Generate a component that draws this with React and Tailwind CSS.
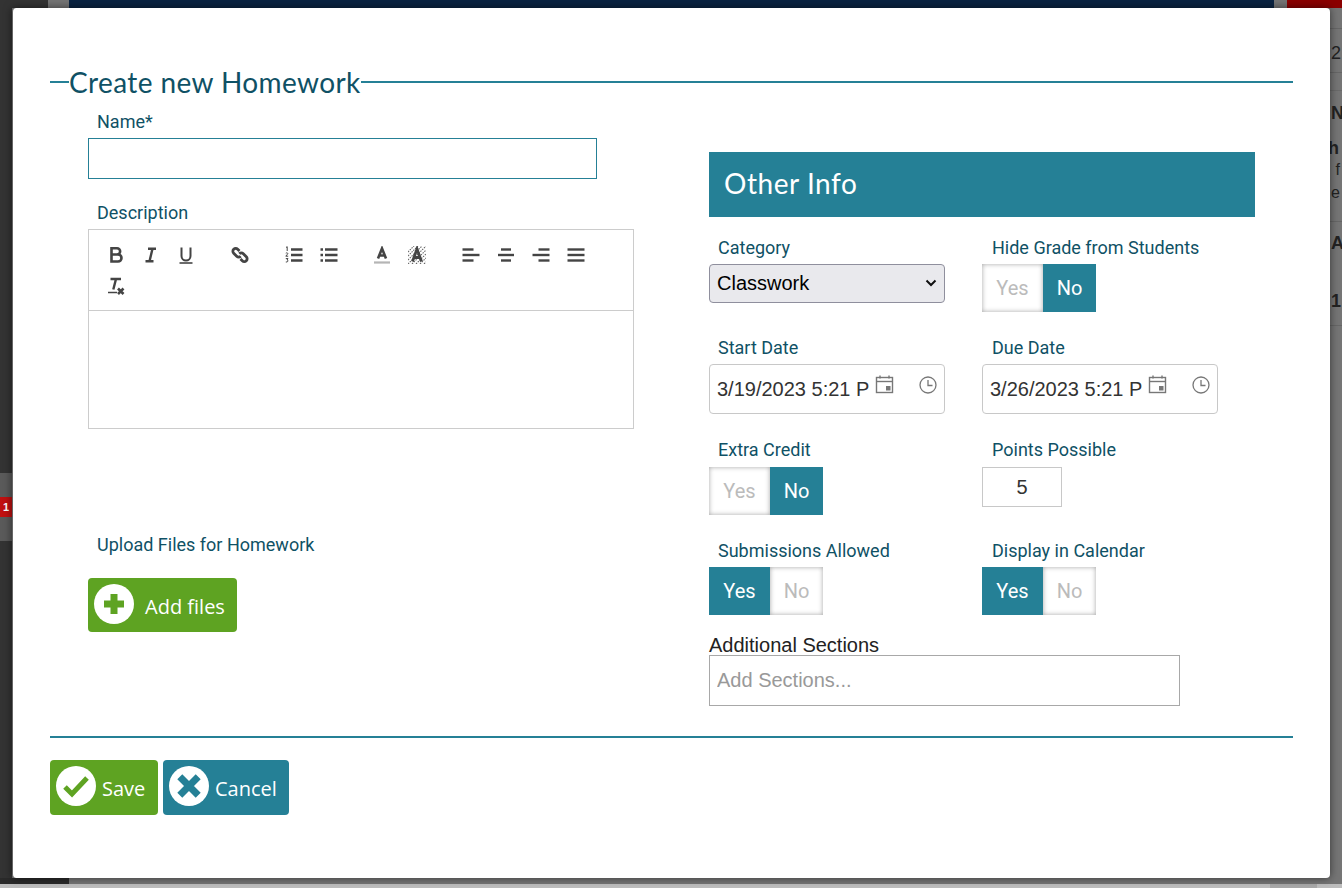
const roboto = "font-['Roboto',sans-serif]";
const arial = "font-['Liberation_Sans',sans-serif]";

function Toggle({ value }) {
  const on = "bg-[#258096] text-white";
  const off = "bg-white text-[#bbbbbb] shadow-[inset_0_0_5px_rgba(0,0,0,0.35)]";
  return (
    <div className={`flex h-12 w-[114px] text-[20px] ${roboto}`}>
      <span className={`flex w-[61px] items-center justify-center ${value === "Yes" ? on : off}`}>Yes</span>
      <span className={`flex w-[53px] items-center justify-center ${value === "No" ? on : off}`}>No</span>
    </div>
  );
}

function Label({ children, className = "" }) {
  return <label className={`block h-6 text-[18px] leading-6 text-[#0f5165] ${roboto} ${className}`}>{children}</label>;
}

function Calendar() {
  return (
    <svg viewBox="0 0 19 19" className="absolute left-[166px] top-[11px] h-[19px] w-[19px]" fill="none" stroke="#777" strokeWidth="1.4">
      <rect x="1.500" y="2.500" width="16" height="15" />
      <path d="M1.500 6.500h16" />
      <path d="M5 0.500v3M14 0.500v3" />
      <rect x="11" y="11" width="4.500" height="4.500" fill="#777" stroke="none" />
    </svg>
  );
}

function Clock() {
  return (
    <svg viewBox="0 0 18 18" className="absolute left-[210px] top-[12px] h-[18px] w-[18px]" fill="none" stroke="#777" strokeWidth="1.300">
      <circle cx="9" cy="9" r="8" />
      <path d="M9 4v5.500h4.500" />
    </svg>
  );
}

function DateField({ value }) {
  return (
    <div className="relative h-[50px] w-[236px]">
      <input
        readOnly
        value={value}
        className={`h-full w-full rounded-[4px] border border-[#c8c8c8] bg-white pl-[7px] pr-[74px] text-[20px] text-[#333] ${arial}`}
      />
      <Calendar />
      <Clock />
    </div>
  );
}

function Tool({ children }) {
  return <span className="flex h-[31px] w-[35px] items-center justify-center">{children}</span>;
}

function Glyph({ children, stroke = "#444" }) {
  return (
    <svg viewBox="0 0 18 18" className="h-[18px] w-[18px]" fill="none" stroke={stroke} strokeWidth="2.400">
      {children}
    </svg>
  );
}

function Lines({ rows }) {
  return (
    <Glyph>
      {rows.map((d) => (
        <path key={d} d={d} />
      ))}
    </Glyph>
  );
}

function Toolbar() {
  return (
    <div className="flex h-[81px] flex-wrap content-start border-b border-[#cccccc] pl-[9.5px] pr-5 pt-[9px]">
      <Tool>
        <Glyph>
          <path d="M4.500 2.200h5.500a3 3 0 0 1 0 6.300H4.500zM4.500 8.500h6.500a3.300 3.300 0 0 1 0 7H4.500z" strokeWidth="2.600" />
        </Glyph>
      </Tool>
      <Tool>
        <Glyph>
          <path d="M6 2.800h8M3.500 15.200h8M10.500 2.800l-3 12.400" />
        </Glyph>
      </Tool>
      <Tool>
        <Glyph>
          <path d="M4.500 1.500v8.500a4.500 4.500 0 0 0 9 0V1.500" strokeWidth="2" />
          <path d="M2.500 17h13" strokeWidth="1.600" />
        </Glyph>
      </Tool>
      <span className="w-[19px]" />
      <Tool>
        <Glyph>
          <path d="M8.500 5 6.700 3.200a2.800 2.800 0 0 0-4 4l3 3a2.800 2.800 0 0 0 4 0" strokeWidth="2.800" />
          <path d="M9.500 13l1.800 1.800a2.800 2.800 0 0 0 4-4l-3-3a2.800 2.800 0 0 0-4 0" strokeWidth="2.800" />
        </Glyph>
      </Tool>
      <span className="w-[19px]" />
      <Tool>
        <Glyph>
          <path d="M6 3.500h11.500M6 9h11.500M6 14.500h11.500" />
          <path d="M1 1.500l1.200-.8v4.300M.8 7.200c1.600-1 2.600.3 1.500 1.200L.8 10.200h2.400M.8 12.600h2.200l-1 1.400c1.300 0 1.500 2.300-1.200 2" strokeWidth="1" />
        </Glyph>
      </Tool>
      <Tool>
        <Glyph>
          <path d="M5 3.500h12.500M5 9h12.500M5 14.500h12.500" />
          <path d="M.5 3.500h2.500M.5 9h2.500M.5 14.500h2.500" />
        </Glyph>
      </Tool>
      <span className="w-[18px]" />
      <Tool>
        <Glyph>
          <path d="M5 12.500 9 2.500l4 10M6.500 9.500h5" strokeWidth="2.600" />
          <path d="M1 16.500h16" stroke="#b5b5b5" strokeWidth="2.200" />
        </Glyph>
      </Tool>
      <Tool>
        <Glyph>
          <path d="M0 6 6 0M0 10 10 0M0 14 14 0M0 18 18 0M4 18 18 4M8 18 18 8M12 18l6-6M16 18l2-2" stroke="#666" strokeWidth="1.100" strokeDasharray="1.500 1" />
          <path d="M4.500 15.500 9 3l4.500 12.500M6 11.500h6" strokeWidth="2.800" />
        </Glyph>
      </Tool>
      <span className="w-[19px]" />
      <Tool>
        <Lines rows={["M0.500 3.500h11", "M0.500 9h17", "M0.500 14.500h11"]} />
      </Tool>
      <Tool>
        <Lines rows={["M4 3.500h10", "M1 9h16", "M4 14.500h10"]} />
      </Tool>
      <Tool>
        <Lines rows={["M6.500 3.500h11", "M0.500 9h17", "M6.500 14.500h11"]} />
      </Tool>
      <Tool>
        <Lines rows={["M0.500 3.500h17", "M0.500 9h17", "M0.500 14.500h17"]} />
      </Tool>
      <Tool>
        <Glyph>
          <path d="M3.500 2h10.500M9 2 6.300 12.500" />
          <path d="M1 15.500h9" strokeWidth="1.500" />
          <path d="M11 11.500l5.500 5.500M16.500 11.500 11 17" strokeWidth="2.600" />
        </Glyph>
      </Tool>
    </div>
  );
}

function ActionButton({ label, tone, className, children }) {
  return (
    <button className={`flex items-start rounded-[4px] text-[20px] text-white font-['Open_Sans',sans-serif] ${tone} ${className}`}>
      <span className="ml-[6px] mt-[6px] flex h-10 w-10 items-center justify-center rounded-full bg-white">{children}</span>
      <span className="mt-[15px] leading-[28px]">{label}</span>
    </button>
  );
}

function OtherInfo() {
  return (
    <div className="ml-[75px] mt-[50px] w-[546px]">
      <div className="flex h-[65px] items-center bg-[#258096] pb-[3px] pl-[15px] text-[28px] tracking-[0.55px] text-white font-['Lato',sans-serif]">
        Other Info
      </div>
      <div className="mt-[19px] grid grid-cols-[273px_1fr] grid-rows-[100px_102px_101px_95px]">
        <div>
          <Label className="ml-[9px]">Category</Label>
          <div className="relative mt-1 h-[39px] w-[236px]">
            <select className={`h-full w-full appearance-none rounded-[4px] border border-[#8f8f9d] bg-[#e9e9ed] pb-[2px] pl-[7px] text-[20px] text-black ${arial}`}>
              <option>Classwork</option>
            </select>
            <svg viewBox="0 0 12 8" className="pointer-events-none absolute left-[216px] top-[15px] h-2 w-3" fill="none" stroke="#111" strokeWidth="2">
              <path d="M1.500 1.500 6 6l4.500-4.500" />
            </svg>
          </div>
        </div>
        <div>
          <Label className="ml-[10px]">Hide Grade from Students</Label>
          <div className="mt-1">
            <Toggle value="No" />
          </div>
        </div>
        <div>
          <Label className="ml-[9px]">Start Date</Label>
          <div className="mt-1">
            <DateField value="3/19/2023 5:21 PM" />
          </div>
        </div>
        <div>
          <Label className="ml-[10px]">Due Date</Label>
          <div className="mt-1">
            <DateField value="3/26/2023 5:21 PM" />
          </div>
        </div>
        <div>
          <Label className="ml-[9px]">Extra Credit</Label>
          <div className="mt-[5px]">
            <Toggle value="No" />
          </div>
        </div>
        <div>
          <Label className="ml-[10px]">Points Possible</Label>
          <input
            readOnly
            value="5"
            className={`mt-[5px] h-10 w-20 border border-[#c8c8c8] bg-white text-center text-[20px] text-[#333] ${arial}`}
          />
        </div>
        <div>
          <Label className="ml-[9px]">Submissions Allowed</Label>
          <div className="mt-1">
            <Toggle value="Yes" />
          </div>
        </div>
        <div>
          <Label className="ml-[10px]">Display in Calendar</Label>
          <div className="mt-1">
            <Toggle value="Yes" />
          </div>
        </div>
      </div>
      <div className={`h-[21px] text-[20px] leading-[22px] text-[#222] ${arial}`}>Additional Sections</div>
      <input
        placeholder="Add Sections..."
        className={`block h-[51px] w-[471px] border border-[#a8a8a8] bg-white pl-[7px] text-[20px] text-[#222] placeholder:text-[#999999] ${arial}`}
      />
    </div>
  );
}

function Modal() {
  return (
    <div className="absolute left-3 top-2 h-[870px] w-[1318px] rounded-[4px] border-l border-[#666666] bg-white pl-[37px] pr-[37px] pt-[54px] shadow-[0_0_8px_rgba(0,0,0,0.55)]">
      <div className="flex h-10 items-center">
        <span className="h-0.5 w-[19px] bg-[#258096]" />
        <h2 className="text-[28px] tracking-[0.4px] text-[#0f5165] font-['Lato',sans-serif]">Create new Homework</h2>
        <span className="h-0.5 flex-1 bg-[#258096]" />
      </div>

      <div className="flex pl-[38px]">
        <div className="w-[546px] shrink-0 pt-2">
          <Label className="ml-[9px]">Name*</Label>
          <input className="mt-1 block h-[41px] w-[509px] border border-[#258096] bg-white" />
          <Label className="ml-[9px] mt-[22px]">Description</Label>
          <div className="mt-1 h-[200px] border border-[#cccccc]">
            <Toolbar />
          </div>
          <Label className="ml-[9px] mt-[104px]">Upload Files for Homework</Label>
          <ActionButton label="Add files" tone="bg-[#5ea322]" className="mt-[21px] h-[54px] w-[149px] gap-[11px]">
            <svg viewBox="0 0 24 24" className="h-6 w-6" fill="#5ea322">
              <path d="M8.500 2h7v6.500H22v7h-6.500V22h-7v-6.500H2v-7h6.500z" />
            </svg>
          </ActionButton>
        </div>
        <OtherInfo />
      </div>

      <div className="mt-[30px] h-0.5 bg-[#258096]" />

      <div className="mt-[22px] flex gap-[5px]">
        <ActionButton label="Save" tone="bg-[#5ea322]" className="h-[55px] w-[108px] gap-[6px]">
          <svg viewBox="0 0 28 24" className="h-6 w-7" fill="none" stroke="#5ea322" strokeWidth="5">
            <path d="M3 13l7 7L25 4" />
          </svg>
        </ActionButton>
        <ActionButton label="Cancel" tone="bg-[#258096]" className="h-[55px] w-[126px] gap-[6px]">
          <svg viewBox="0 0 24 24" className="h-[26px] w-[26px]" fill="none" stroke="#258096" strokeWidth="6.500">
            <path d="M3.500 3.500l17 17M20.500 3.500l-17 17" />
          </svg>
        </ActionButton>
      </div>
    </div>
  );
}

function PageBehind() {
  return (
    <div className={`flex h-full flex-col bg-[#757575] text-[18px] text-[#222] ${arial}`}>
      <div className="flex h-2 shrink-0">
        <span className="w-12 bg-[#333333]" />
        <span className="w-[21px] bg-[#757575]" />
        <span className="flex-1 bg-[#0a2342]" />
        <span className="w-[13px] bg-[#757575]" />
        <span className="w-[55px] bg-[#8b0000]" />
      </div>
      <div className="flex min-h-0 flex-1 justify-between">
        <div className="flex w-3 flex-col bg-[#333333]">
          <div className="mt-[465px] flex h-[68px] flex-col justify-center bg-[#5a5a5a]">
            <span className="flex h-5 items-center justify-center bg-[#c01010] text-[11px] font-bold text-white">1</span>
          </div>
        </div>
        <div className="w-3 overflow-hidden whitespace-nowrap leading-5">
          <div className="mt-5 h-[45px] border-y border-[#666666] pl-[1px] pt-[14px]">2</div>
          <div className="h-[18px] border-b border-[#6a6a6a]" />
          <div className="flex h-[131px] flex-col border-b border-[#666666] pl-[1px] pt-3">
            <b>N</b>
            <b className="-ml-[3px] mt-[15px]">h</b>
            <span className="mt-[2px] text-[16px]">&nbsp;f</span>
            <span className="mt-[3px] text-[16px]">e</span>
          </div>
          <div className="flex h-[104px] flex-col border-b border-[#666666] pl-[1px] pt-[11px]">
            <b>A</b>
            <b className="mt-[38px]">1</b>
          </div>
        </div>
      </div>
      <div className="flex h-[6px] shrink-0">
        <span className="w-[69px] bg-[#2a2a2a]" />
      </div>
      <div className="flex h-1 shrink-0 bg-[#bdbdbd]">
        <span className="ml-[1270px] h-1 w-[47px] bg-[#a8a8a8]" />
      </div>
    </div>
  );
}

export default function App() {
  return (
    <div className="relative h-[888px] w-[1342px] overflow-hidden">
      <PageBehind />
      <Modal />
    </div>
  );
}
